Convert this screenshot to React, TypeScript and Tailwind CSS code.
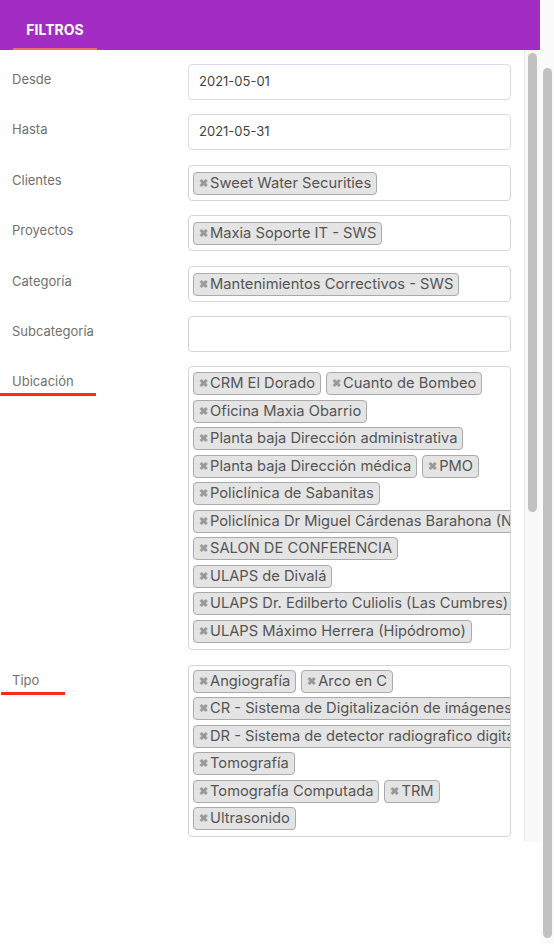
const ubicaciones = [
  'CRM El Dorado',
  'Cuanto de Bombeo',
  'Oficina Maxia Obarrio',
  'Planta baja Dirección administrativa',
  'Planta baja Dirección médica',
  'PMO',
  'Policlínica de Sabanitas',
  'Policlínica Dr Miguel Cárdenas Barahona (Nuevo San Juan)',
  'SALON DE CONFERENCIA',
  'ULAPS de Divalá',
  'ULAPS Dr. Edilberto Culiolis (Las Cumbres)',
  'ULAPS Máximo Herrera (Hipódromo)',
];

const tipos = [
  'Angiografía',
  'Arco en C',
  'CR - Sistema de Digitalización de imágenes',
  'DR - Sistema de detector radiografico digital',
  'Tomografía',
  'Tomografía Computada',
  'TRM',
  'Ultrasonido',
];

function Chip({ text }: { text: string }) {
  return (
    <li className="flex shrink-0 items-center h-[23px] pl-[5px] pr-[5px] bg-[#e4e4e4] border border-[#aaaaaa] rounded-[4px] whitespace-nowrap">
      <span className="text-[#999] text-[11px] font-bold mr-[2px] leading-none">✖</span>
      <span className="text-[#555] text-[14.7px] leading-none">{text}</span>
    </li>
  );
}

function TagBox({ items, className = '' }: { items: string[]; className?: string }) {
  return (
    <ul
      className={`w-[323px] border border-[#d5d5d5] rounded-[4px] overflow-hidden flex flex-wrap gap-x-[5px] gap-y-[4.5px] pl-[4px] ${className}`}
    >
      {items.map((t) => (
        <Chip key={t} text={t} />
      ))}
    </ul>
  );
}

function Row({
  label,
  children,
  mark,
  className = '',
}: {
  label: string;
  children: React.ReactNode;
  mark?: string;
  className?: string;
}) {
  return (
    <div className={`flex ${className}`}>
      <div className="w-[176px] pt-[5px]">
        <div className="text-[13px] leading-[20px] text-[#717171]">{label}</div>
        {mark === 'ubicacion' && <div className="mt-[2px] -ml-[12px] w-[96px] h-[3px] bg-[#fd2a14]" />}
        {mark === 'tipo' && <div className="mt-[2px] -ml-[11px] w-[64px] h-[3px] bg-[#fd2a14]" />}
      </div>
      {children}
    </div>
  );
}

function TextBox({ value = '', blue = false }: { value?: string; blue?: boolean }) {
  return (
    <div
      className={`w-[323px] h-[36px] rounded-[4px] border flex items-center pl-[10px] text-[13px] text-[#444] ${
        blue ? 'border-[#dcdbe9]' : 'border-[#d5d5d5]'
      }`}
    >
      {value}
    </div>
  );
}

function SingleTag({ text }: { text: string }) {
  return (
    <div className="w-[323px] h-[36px] rounded-[4px] border border-[#d5d5d5] flex items-center px-[4px] overflow-hidden">
      <ul className="flex">
        <Chip text={text} />
      </ul>
    </div>
  );
}

export default function App() {
  return (
    <div className="flex w-[554px] h-[944px] bg-white overflow-hidden font-['Inter',sans-serif]">
      <div className="w-[540px] flex flex-col">
        {/* Header */}
        <div className="h-[50px] bg-[#a32cc4] flex">
          <div className="ml-[13px] w-[84px] flex items-center justify-center pt-[10px] border-b-2 border-[#f26d6a]">
            <span className="text-white text-[14px] font-bold">FILTROS</span>
          </div>
        </div>

        {/* Body */}
        <div className="flex h-[792px]">
          <div className="w-[524px] overflow-hidden pt-[14px] pl-[12px]">
            <Row label="Desde" className="mb-[14px]">
              <TextBox value="2021-05-01" blue />
            </Row>
            <Row label="Hasta" className="mb-[15px]">
              <TextBox value="2021-05-31" blue />
            </Row>
            <Row label="Clientes" className="mb-[14px]">
              <SingleTag text="Sweet Water Securities" />
            </Row>
            <Row label="Proyectos" className="mb-[15px]">
              <SingleTag text="Maxia Soporte IT - SWS" />
            </Row>
            <Row label="Categoría" className="mb-[14px]">
              <SingleTag text="Mantenimientos Correctivos - SWS" />
            </Row>
            <Row label="Subcategoría" className="mb-[14px]">
              <TextBox />
            </Row>
            <Row label="Ubicación" mark="ubicacion" className="mb-[15px]">
              <TagBox items={ubicaciones} className="pt-[5px] pb-[6px] pr-[23px]" />
            </Row>
            <Row label="Tipo" mark="tipo">
              <TagBox items={tipos} className="pt-[4px] pb-[6px] pr-[29px]" />
            </Row>
          </div>
          <div className="w-[16px] bg-[#f8f8f8] border-l border-[#ececec]">
            <div className="mt-[3px] ml-[3px] w-[9px] h-[459px] rounded-full bg-[#c1c1c1]" />
          </div>
        </div>
      </div>
      <div className="w-[14px] bg-[#fbfbfb]">
        <div className="mt-[68px] ml-[3px] w-[9px] h-[870px] rounded-full bg-[#c1c1c1]" />
      </div>
    </div>
  );
}
